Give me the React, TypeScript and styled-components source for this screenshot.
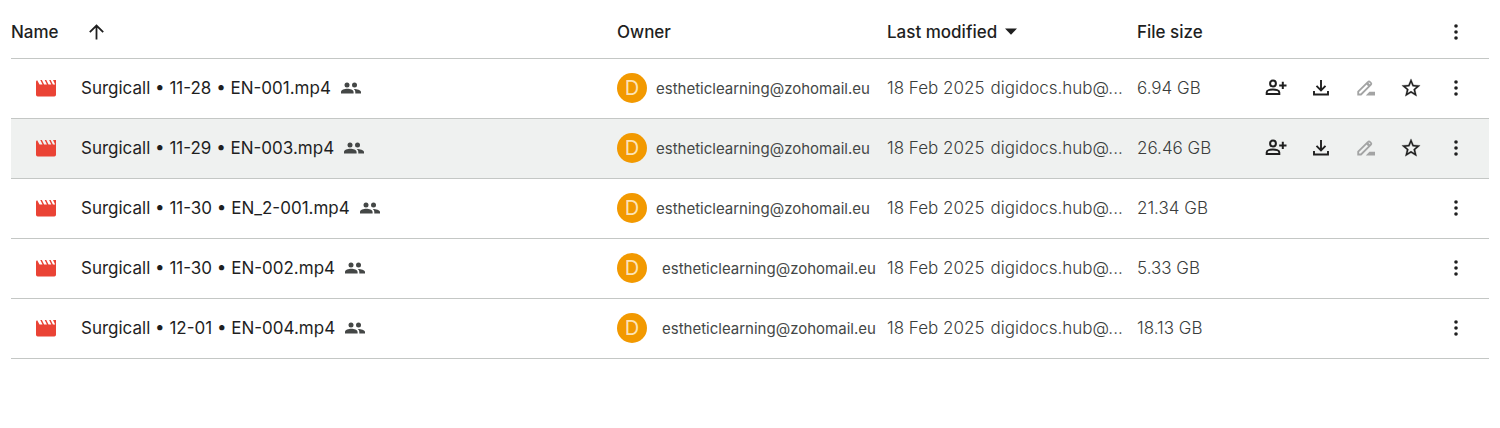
import React from "react";
import styled, { createGlobalStyle } from "styled-components";

const GlobalStyle = createGlobalStyle`
  * { box-sizing: border-box; }
  body {
    margin: 0;
    background: #fff;
    color: #1f1f1f;
    font-family: Inter, "Liberation Sans", sans-serif;
    font-size: 17px;
  }
`;

const Page = styled.main`
  padding: 6px 11px 0;
`;

const FileTable = styled.table`
  width: 100%;
  table-layout: fixed;
  border-collapse: collapse;
`;

const Col = styled.col<{ $width?: number }>`
  width: ${(p) => (p.$width ? `${p.$width}px` : "auto")};
`;

const Row = styled.tr<{ $active?: boolean }>`
  background: ${(p) => (p.$active ? "#eff1f0" : "transparent")};
  border-bottom: 1px solid #c4c7c5;
`;

const HeadCell = styled.th`
  height: 52px;
  padding: 0;
  text-align: left;
  font-weight: 500;
  white-space: nowrap;
`;

const Cell = styled.td`
  height: 60px;
  padding: 0;
  color: #444746;
  white-space: nowrap;
`;

const MetaCell = styled(Cell)`
  color: #3a3d3c;
  font-weight: 300;
`;

const Line = styled.div<{ $gap?: number; $indent?: number }>`
  display: flex;
  align-items: center;
  gap: ${(p) => p.$gap ?? 0}px;
  padding-left: ${(p) => p.$indent ?? 0}px;
`;

const SortButton = styled.button`
  display: inline-flex;
  align-items: center;
  gap: 8px;
  padding: 0;
  border: 0;
  background: none;
  color: inherit;
  font: inherit;
`;

const FileName = styled.span`
  padding-right: 10px;
  padding-left: 25px;
  color: #1f1f1f;
`;

const Avatar = styled.span`
  display: flex;
  flex: none;
  align-items: center;
  justify-content: center;
  width: 30px;
  height: 30px;
  border-radius: 50%;
  background: #f29900;
  color: #fde3b5;
  font-size: 20px;
`;

const Email = styled.span`
  font-size: 15px;
`;

const Actions = styled.div`
  display: flex;
  justify-content: flex-end;
  padding-right: 11px;
`;

const IconButton = styled.button`
  display: flex;
  align-items: center;
  justify-content: center;
  width: 45px;
  height: 45px;
  padding: 0;
  border: 0;
  background: none;
  color: #1f1f1f;

  &:disabled { color: #a3a4a4; }
`;

const Svg = styled.svg`
  display: block;
  flex: none;
  fill: currentColor;
`;

const MovieIcon = () => (
  <Svg width="20" height="18" viewBox="0 0 20 18" color="#ea4335" aria-hidden="true">
    <path d="M1.200 1.200L3.500 5.500h3L4.300 1h1.600l2.200 4.500h2.800L8.700 1h1.600l2.200 4.500h2.800L13.100 1h1.600l2.200 4.500h2.300L17 1h3v14.800a1.700 1.700 0 0 1-1.700 1.700H1.700A1.700 1.700 0 0 1 0 15.800V2.700a1.700 1.700 0 0 1 1.200-1.500z" />
  </Svg>
);

const PeopleIcon = () => (
  <Svg width="20" height="12" viewBox="0 0 20 12" color="#444746" aria-hidden="true">
    <circle cx="6" cy="3" r="2.500" />
    <circle cx="13.500" cy="3" r="2.500" />
    <path d="M0 11.500V10c0-2.200 3.500-3.200 6.300-3.200s6.300 1 6.300 3.200v1.500zM14.300 11.500V10c0-1.300-.6-2.300-1.500-3.100 3.200 0 7.200.9 7.200 3.100v1.500z" />
  </Svg>
);

const ArrowUp = () => (
  <Svg width="15" height="16" viewBox="0 0 15 16" aria-hidden="true">
    <path fill="none" stroke="currentColor" strokeWidth="1.800" d="M7.500 15.500V2M.8 8.200L7.500 1.500l6.700 6.700" />
  </Svg>
);

const Caret = () => (
  <Svg width="12" height="7" viewBox="0 0 12 7" aria-hidden="true">
    <path d="M0 .5h12L6 6.700z" />
  </Svg>
);

const AddPersonIcon = () => (
  <Svg width="22" height="18" viewBox="0 0 22 18" aria-hidden="true">
    <g fill="none" stroke="currentColor" strokeWidth="2">
      <circle cx="8" cy="4.500" r="2.900" />
      <path d="M1.700 15v-1.600c0-1.900 3.500-2.900 6.300-2.900s6.300 1 6.300 2.900V15z" />
      <path d="M17.800 2.800v7.200M14.200 6.400h7.300" />
    </g>
  </Svg>
);

const DownloadIcon = () => (
  <Svg width="16" height="16" viewBox="0 0 16 16" aria-hidden="true">
    <g fill="none" stroke="currentColor" strokeWidth="1.900">
      <path d="M8 0v10M3.500 5.800l4.500 4.500 4.500-4.500M1 11v3.500h14V11" />
    </g>
  </Svg>
);

const PencilIcon = () => (
  <Svg width="18" height="16" viewBox="0 0 18 16" aria-hidden="true">
    <path fill="none" stroke="currentColor" strokeWidth="1.800" d="M1.200 14.500v-2.800l9.900-9.900a1.200 1.200 0 0 1 1.800 0l1 1a1.200 1.200 0 0 1 0 1.800L4 14.500z" />
    <path d="M10.800 2.200l2.700 2.700-1.800 1.800L9 4zM8.800 15.400l3.600-3.600H18v3.600z" />
  </Svg>
);

const StarIcon = () => (
  <Svg width="22" height="22" viewBox="0 0 24 24" aria-hidden="true">
    <path d="M22 9.240l-7.190-.62L12 2 9.190 8.630 2 9.240l5.460 4.730L5.820 21 12 17.270 18.180 21l-1.630-7.030L22 9.240zM12 15.400l-3.760 2.270 1-4.280-3.320-2.880 4.380-.38L12 6.100l1.710 4.040 4.380.38-3.320 2.880 1 4.280L12 15.400z" stroke="currentColor" strokeWidth="0.3" />
  </Svg>
);

const MoreIcon = () => (
  <Svg width="4" height="16" viewBox="0 0 4 16" aria-hidden="true">
    <circle cx="2" cy="2" r="1.800" />
    <circle cx="2" cy="8" r="1.800" />
    <circle cx="2" cy="14" r="1.800" />
  </Svg>
);

type FileEntry = { name: string; size: string; active?: boolean; quick?: boolean; ownerGap: number };

const files: FileEntry[] = [
  { name: "Surgicall • 11-28 • EN-001.mp4", size: "6.94 GB", quick: true, ownerGap: 9 },
  { name: "Surgicall • 11-29 • EN-003.mp4", size: "26.46 GB", quick: true, active: true, ownerGap: 9 },
  { name: "Surgicall • 11-30 • EN_2-001.mp4", size: "21.34 GB", ownerGap: 9 },
  { name: "Surgicall • 11-30 • EN-002.mp4", size: "5.33 GB", ownerGap: 15 },
  { name: "Surgicall • 12-01 • EN-004.mp4", size: "18.13 GB", ownerGap: 15 },
];

export default function App() {
  return (
    <>
      <GlobalStyle />
      <Page>
        <FileTable>
          <colgroup>
            <Col />
            <Col $width={270} />
            <Col $width={250} />
            <Col $width={110} />
            <Col $width={242} />
          </colgroup>
          <thead>
            <Row>
              <HeadCell>
                <Line $gap={30}>
                  Name
                  <SortButton aria-label="Reverse sort direction"><ArrowUp /></SortButton>
                </Line>
              </HeadCell>
              <HeadCell>Owner</HeadCell>
              <HeadCell><SortButton>Last modified <Caret /></SortButton></HeadCell>
              <HeadCell>File size</HeadCell>
              <HeadCell>
                <Actions><IconButton aria-label="More options"><MoreIcon /></IconButton></Actions>
              </HeadCell>
            </Row>
          </thead>
          <tbody>
            {files.map((file) => (
              <Row key={file.name} $active={file.active}>
                <Cell>
                  <Line $indent={25}>
                    <MovieIcon />
                    <FileName>{file.name}</FileName>
                    <PeopleIcon />
                  </Line>
                </Cell>
                <Cell>
                  <Line $gap={file.ownerGap}>
                    <Avatar>D</Avatar>
                    <Email>estheticlearning@zohomail.eu</Email>
                  </Line>
                </Cell>
                <MetaCell>
                  <Line $gap={6}>
                    <span>18 Feb 2025</span>
                    <span>digidocs.hub@...</span>
                  </Line>
                </MetaCell>
                <MetaCell>{file.size}</MetaCell>
                <Cell>
                  <Actions>
                    {file.quick && (
                      <>
                        <IconButton aria-label="Share"><AddPersonIcon /></IconButton>
                        <IconButton aria-label="Download"><DownloadIcon /></IconButton>
                        <IconButton aria-label="Rename" disabled><PencilIcon /></IconButton>
                        <IconButton aria-label="Add to starred"><StarIcon /></IconButton>
                      </>
                    )}
                    <IconButton aria-label="More actions"><MoreIcon /></IconButton>
                  </Actions>
                </Cell>
              </Row>
            ))}
          </tbody>
        </FileTable>
      </Page>
    </>
  );
}
